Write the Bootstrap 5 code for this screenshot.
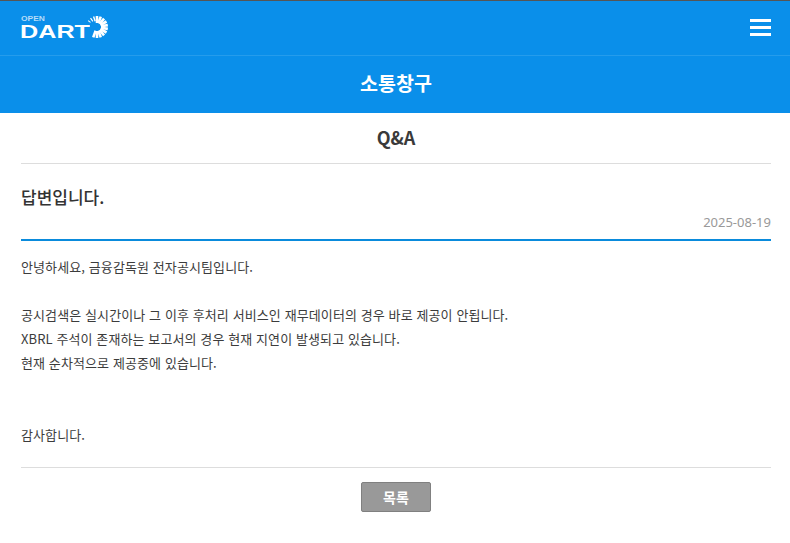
<!DOCTYPE html>
<html lang="ko">
<head>
  <meta charset="UTF-8">
  <title>소통창구 Q&amp;A</title>
  <link href="https://cdn.jsdelivr.net/npm/bootstrap@5.3.3/dist/css/bootstrap.min.css" rel="stylesheet">
  <style>
    body {
      font-family: "Noto Sans CJK KR", "Noto Sans", sans-serif;
      color: #333;
      background: #fff;
    }
    .top-bar {
      height: 56px;
      background: #0a8fea;
      border-top: 1px solid #555;
      border-bottom: 1px solid #259cec;
      padding: 0 19px 1px 20px;
    }
    .logo-box { width: 88px; height: 26px; }
    .logo-open { font: 700 7px/7px "Liberation Sans", sans-serif; color: #b5dcf8; transform: scaleX(1.2); transform-origin: left; margin-left: 1px; }
    .logo-dart { font: 700 18px/15px "Liberation Sans", sans-serif; color: #fff; transform: scaleX(1.4); transform-origin: left; margin-top: 3px; }
    .logo-sun { top: -1px; right: 0; }
    .menu-btn { width: 21px; height: 17px; border: 0; padding: 0; background: none; }
    .menu-btn i { display: block; height: 3px; background: #fff; }
    .page-title {
      height: 57px;
      padding: 0 0 4px 2px;
      background: #0a8fea;
      color: #fff;
      font-size: 19.500px;
      font-weight: 700;
    }
    .board-wrap { padding: 0 19px 0 21px; }
    .board-head {
      height: 51px;
      padding-bottom: 2px;
      border-bottom: 1px solid #ddd;
      font-size: 18px;
      font-weight: 700;
      color: #3a3a3a;
    }
    .post-title { font-size: 17px; font-weight: 500; line-height: 24px; padding-top: 21px; color: #333; }
    .post-date {
      font-family: "Noto Sans", sans-serif;
      font-size: 13px;
      line-height: 18px;
      color: #999;
      padding: 4px 0 8px;
      border-bottom: 2px solid #0a8bdc;
    }
    .post-body { font-size: 13px; letter-spacing: .1px; line-height: 24px; padding: 14px 0 20px; border-bottom: 1px solid #ddd; color: #3c3c3c; }
    .post-body p { margin: 0; }
    .list-btn {
      width: 70px;
      height: 30px;
      padding: 0;
      font-size: 14px;
      font-weight: 700;
      color: #fff;
      background: #999;
      border: 1px solid #808080;
      border-radius: 2px;
    }
    .btn-row { padding-top: 14px; }
  </style>
</head>
<body>

<header class="top-bar d-flex justify-content-between align-items-center">
  <a href="#" class="logo-box position-relative d-block text-decoration-none">
    <div class="logo-open">OPEN</div>
    <div class="logo-dart">DART</div>
    <svg class="logo-sun position-absolute" width="26" height="28" viewBox="0 0 26 28">
      <g transform="translate(15 13)" stroke="#fff" stroke-width="2.600">
        <line y1="-4" y2="-11"/>
        <line y1="-4" y2="-11" transform="rotate(20)"/>
        <line y1="-4" y2="-11" transform="rotate(40)"/>
        <line y1="-4" y2="-11" transform="rotate(60)"/>
        <line y1="-4" y2="-11" transform="rotate(80)"/>
        <line y1="-4" y2="-11" transform="rotate(100)"/>
        <line y1="-4" y2="-11" transform="rotate(120)"/>
        <line y1="-4" y2="-11" transform="rotate(140)"/>
        <line y1="-4" y2="-11" transform="rotate(160)"/>
        <line y1="-4" y2="-11" transform="rotate(180)"/>
        <line y1="-4" y2="-11" transform="rotate(200)"/>
        <line y1="-6" y2="-11" stroke-width="1.400" transform="rotate(-18)"/>
        <line y1="-7" y2="-11" stroke-width="1.200" transform="rotate(-36)"/>
        <line y1="-8" y2="-11" stroke-width="1" transform="rotate(-54)"/>
      </g>
    </svg>
  </a>
  <button class="menu-btn d-flex flex-column justify-content-between" type="button" aria-label="메뉴">
    <i class="w-100"></i><i class="w-100"></i><i class="w-100"></i>
  </button>
</header>

<div class="page-title d-flex align-items-center justify-content-center">소통창구</div>

<main class="board-wrap">
  <div class="board-head d-flex align-items-center justify-content-center">Q&amp;A</div>
  <div class="post-title">답변입니다.</div>
  <div class="post-date text-end">2025-08-19</div>
  <div class="post-body">
    <p>안녕하세요, 금융감독원 전자공시팀입니다.</p>
    <p>&nbsp;</p>
    <p>공시검색은 실시간이나 그 이후 후처리 서비스인 재무데이터의 경우 바로 제공이 안됩니다.</p>
    <p>XBRL 주석이 존재하는 보고서의 경우 현재 지연이 발생되고 있습니다.</p>
    <p>현재 순차적으로 제공중에 있습니다.</p>
    <p>&nbsp;</p>
    <p>&nbsp;</p>
    <p>감사합니다.</p>
  </div>
  <div class="btn-row text-center">
    <button class="list-btn" type="button">목록</button>
  </div>
</main>

</body>
</html>
